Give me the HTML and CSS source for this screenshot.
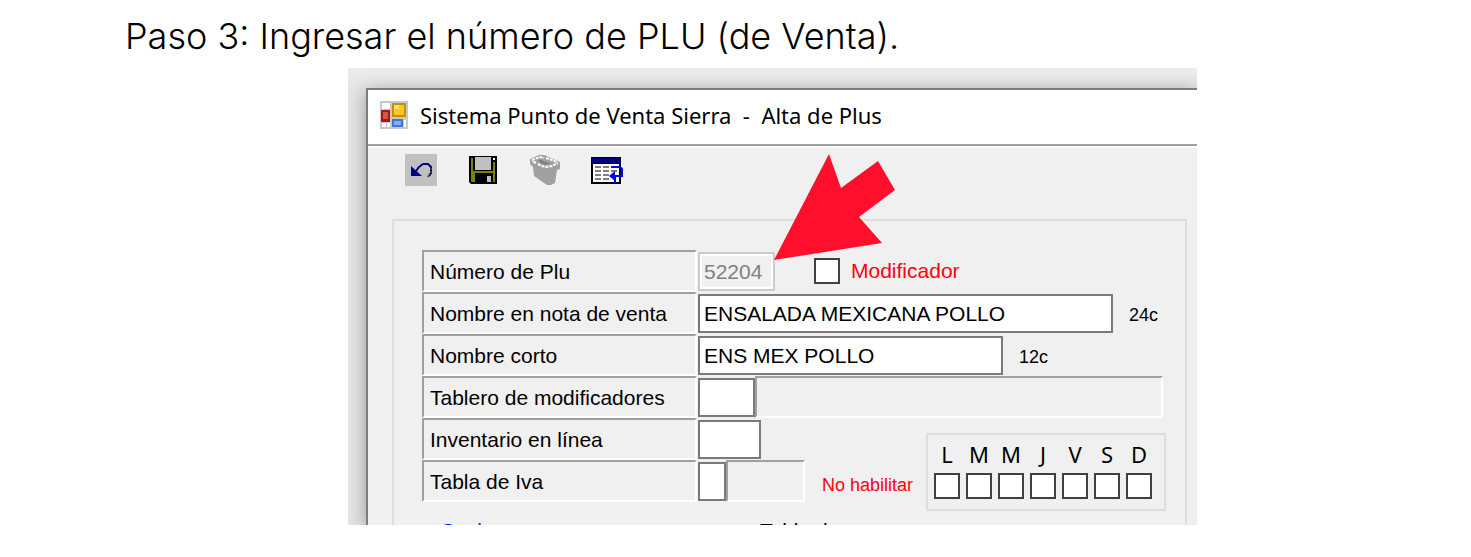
FILE: index.html
```
<!DOCTYPE html>
<html lang="es">
<head>
    <meta charset="UTF-8">
    <meta name="viewport" content="width=device-width, initial-scale=1.0">
    <title>Alta de Plus</title>
    <link rel="stylesheet" href="styles.css">
</head>
<body>
    <h1>Paso 3: Ingresar el número de PLU (de Venta).</h1>

    <div class="capture">
        <div class="window">
            <div class="titlebar">
                <svg class="app-icon" width="28" height="28" viewBox="0 0 28 28">
                    <rect width="28" height="28" fill="#c8c8c8"/>
                    <path d="M2 2h8v6H2zM2 22h4v4H2zM7 22h3v4H7zM24 19h2v7h-2z" fill="#fff"/>
                    <rect x="1" y="9" width="9" height="12" fill="#a01c14"/>
                    <rect x="3" y="11" width="5" height="7" fill="#d8544a"/>
                    <rect x="12" y="2" width="14" height="14" fill="#c89000"/>
                    <rect x="14" y="4" width="10" height="10" fill="#fcc828"/>
                    <rect x="14" y="4" width="5" height="4" fill="#ffe27a"/>
                    <rect x="12" y="18" width="11" height="8" fill="#4078d0"/>
                    <rect x="14" y="20" width="7" height="4" fill="#80b0f4"/>
                </svg>
                <span>Sistema Punto de Venta Sierra&nbsp; -&nbsp; Alta de Plus</span>
            </div>

            <div class="toolbar">
                <button type="button" class="active" aria-label="Deshacer">
                    <svg width="32" height="32" viewBox="0 0 32 32">
                        <path d="M6 12v10h11z" fill="#000080"/>
                        <path d="M11 17l3-4 4-3h5l3 3v6l-2 3" fill="none" stroke="#000080" stroke-width="2"/>
                        <path d="M26 14v5l-3 4" fill="none" stroke="#333" stroke-width="2" stroke-dasharray="2 1"/>
                    </svg>
                </button>
                <button type="button" aria-label="Guardar">
                    <svg width="32" height="32" viewBox="0 0 32 32">
                        <path d="M2 2h28v28H4l-2-2z" fill="#000"/>
                        <path d="M4 4h2v13h20V8h2v20h-2v-9H8v9H4z" fill="#808000"/>
                        <rect x="8" y="3" width="16" height="13" fill="#c0c0c0"/>
                        <rect x="26" y="4" width="2" height="2" fill="#fff"/>
                        <rect x="20" y="22" width="4" height="6" fill="#c0c0c0"/>
                    </svg>
                </button>
                <button type="button" aria-label="Eliminar">
                    <svg width="32" height="32" viewBox="0 0 32 32">
                        <path d="M1 5l9-4h5l16 7v7l-3 1-2 13-4 2h-4L5 22 4 13 1 10z" fill="#a0a0a0"/>
                        <path d="M3 6l8-3 4 1M7 9L3 7M9 10l4 2 4 1 6-1 4-2 2-1M17 4l6 2 5 2" fill="none" stroke="#fff" stroke-width="2" stroke-dasharray="3 1"/>
                        <path d="M9 6h4l3 2 5 1-4 2-5-2z" fill="#808080"/>
                    </svg>
                </button>
                <button type="button" aria-label="Tabla">
                    <svg width="34" height="32" viewBox="0 0 34 32">
                        <rect x="0" y="3" width="30" height="27" fill="#000"/>
                        <rect x="1" y="4" width="28" height="5" fill="#000080"/>
                        <rect x="2" y="10" width="26" height="18" fill="#fff"/>
                        <path d="M4 13h6M12 13h6M4 17h6M12 17h6M20 17h6M4 21h6M12 21h6M4 25h6M12 25h6" stroke="#808080" stroke-width="2"/>
                        <path d="M20 13h9l2 2v7H21" fill="none" stroke="#0000ff" stroke-width="2"/>
                        <path d="M18 22l6-5v10z" fill="#0000ff"/>
                        <path d="M24 22v7" stroke="#0000ff" stroke-width="2"/>
                    </svg>
                </button>
            </div>

            <form class="group">
                <div class="row">
                    <label class="name" for="plu">Número de Plu</label>
                    <input class="field w-plu" id="plu" type="text" value="52204" disabled>
                    <input class="check modifier" id="modificador" type="checkbox">
                    <label class="red" for="modificador">Modificador</label>
                </div>
                <div class="row">
                    <label class="name" for="nota">Nombre en nota de venta</label>
                    <input class="field w-nota" id="nota" type="text" value="ENSALADA MEXICANA POLLO">
                    <span class="hint">24c</span>
                </div>
                <div class="row">
                    <label class="name" for="corto">Nombre corto</label>
                    <input class="field w-corto" id="corto" type="text" value="ENS MEX POLLO">
                    <span class="hint">12c</span>
                </div>
                <div class="row">
                    <label class="name" for="tablero">Tablero de modificadores</label>
                    <input class="field w-tablero" id="tablero" type="text">
                    <div class="sunken wide"></div>
                </div>
                <div class="bottom">
                    <div>
                        <div class="row">
                            <label class="name" for="inventario">Inventario en línea</label>
                            <input class="field w-inventario" id="inventario" type="text">
                        </div>
                        <div class="row">
                            <label class="name" for="iva">Tabla de Iva</label>
                            <input class="field w-iva" id="iva" type="text">
                            <div class="sunken narrow"></div>
                        </div>
                    </div>
                    <span class="disable-text">No habilitar</span>
                    <div class="days">
                        <label>L<input class="check" type="checkbox"></label>
                        <label>M<input class="check" type="checkbox"></label>
                        <label>M<input class="check" type="checkbox"></label>
                        <label>J<input class="check" type="checkbox"></label>
                        <label>V<input class="check" type="checkbox"></label>
                        <label>S<input class="check" type="checkbox"></label>
                        <label>D<input class="check" type="checkbox"></label>
                    </div>
                </div>
                <div class="cut">
                    <span class="blue">Cocina</span>
                    <span>Tabla d</span>
                </div>
            </form>
        </div>

        <svg class="arrow" width="122" height="106" viewBox="0 0 122 106">
            <path d="M0 106L55 0l12 34 37-27 17 29-36 27 23 26z" fill="#ff0f2b"/>
        </svg>
    </div>
</body>
</html>
```
FILE: styles.css
```
* {
    box-sizing: border-box;
}
body {
    margin: 0;
    background: #fff;
    color: #000;
    font-family: "Liberation Sans", Arial, sans-serif;
    font-size: 21px;
}
h1 {
    margin: 0;
    padding: 14px 0 10px 125px;
    font-family: Inter, sans-serif;
    font-size: 36px;
    font-weight: 300;
    line-height: 44px;
}
.capture {
    position: relative;
    margin: 0 274px 0 348px;
    padding: 20px 0 0 18px;
    background: linear-gradient(#ededed, #e6e6e6 20px);
    overflow: hidden;
}
.window {
    border-top: 2px solid #7c7c7c;
    border-left: 2px solid #7c7c7c;
    background: #f0f0f0;
    box-shadow: 0 4px 18px rgba(0, 0, 0, 0.35);
}

/* barra de título */
.titlebar {
    display: flex;
    align-items: center;
    gap: 12px;
    height: 56px;
    padding: 0 0 4px 12px;
    background: #fff;
    border-bottom: 2px solid #a0a0a0;
    box-shadow: 0 2px #fff;
    font-family: "Noto Sans", sans-serif;
    font-size: 22px;
    white-space: nowrap;
}

/* barra de herramientas */
.toolbar {
    display: flex;
    gap: 30px;
    padding: 8px 0 33px 37px;
}
.toolbar button {
    width: 32px;
    height: 32px;
    padding: 0;
    border: none;
    background: none;
}
.toolbar .active {
    background: #c0c0c0;
}
.toolbar svg {
    display: block;
}

/* formulario */
.group {
    margin: 0 10px 0 24px;
    padding: 29px 22px 0 28px;
    border: 2px solid #dedede;
    border-bottom: none;
}
.row {
    display: flex;
    align-items: center;
    height: 42px;
    white-space: nowrap;
}
.name,
.sunken {
    height: 42px;
    border: 2px solid #fff;
    border-top-color: #a0a0a0;
    border-left-color: #a0a0a0;
}
.name {
    flex: none;
    width: 275px;
    margin-right: 1px;
    padding-left: 6px;
    line-height: 40px;
}
.field {
    flex: none;
    height: 39px;
    margin: 1px 0 0;
    padding: 0 4px;
    border: 2px solid #7a7a7a;
    border-radius: 0;
    background: #fff;
    color: #000;
    font: inherit;
}
.field:disabled {
    border-color: #ccc;
    background: #f0f0f0;
    box-shadow: inset 0 0 0 2px #fff;
    color: #808080;
}
.w-plu { width: 77px; }
.w-nota { width: 415px; }
.w-corto { width: 305px; }
.w-tablero { width: 57px; }
.w-inventario { width: 63px; }
.w-iva { width: 28px; }
.wide {
    flex: 1;
}
.narrow {
    width: 79px;
}
.check {
    appearance: none;
    width: 26px;
    height: 26px;
    margin: 0;
    border: 2px solid #404040;
    background: #fff;
}
.modifier {
    margin: 0 11px 0 39px;
}
.red {
    color: #ff0010;
}
.hint {
    margin: 4px 0 0 16px;
    font-size: 18px;
}
.bottom {
    display: flex;
    align-items: flex-start;
}
.disable-text {
    flex: none;
    width: 104px;
    margin: 56px 0 0 17px;
    color: #ff0010;
    font-size: 18px;
    line-height: 22px;
    white-space: nowrap;
}
.days {
    display: flex;
    flex: none;
    gap: 6px;
    width: 240px;
    height: 78px;
    margin-top: 15px;
    padding: 6px;
    border: 2px solid #dedede;
}
.days label {
    display: flex;
    flex-direction: column;
    align-items: center;
    gap: 6px;
    font-family: "Noto Sans", sans-serif;
    font-size: 22px;
    line-height: 26px;
}

/* la captura termina justo al empezar esta línea */
.cut {
    display: flex;
    height: 14px;
    padding: 8px 0 0 18px;
    line-height: 24px;
    overflow: hidden;
}
.cut .blue {
    width: 320px;
    color: #0000ff;
}

.arrow {
    position: absolute;
    left: 426px;
    top: 86px;
}
```
